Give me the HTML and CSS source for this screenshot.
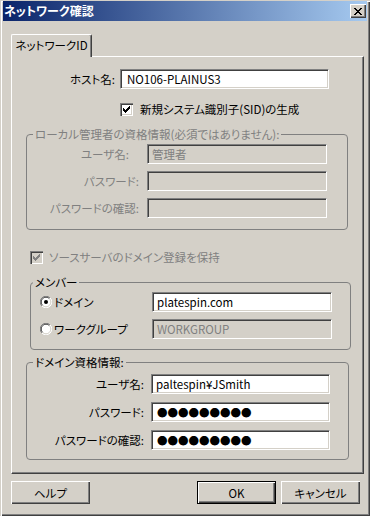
FILE: index.html
```html
<!DOCTYPE html>
<html lang="ja">
<head>
    <meta charset="UTF-8">
    <title>ネットワーク確認</title>
    <link rel="stylesheet" href="styles.css">
</head>
<body>
<div class="window">
    <div class="titlebar">
        <span class="title">ネットワーク確認</span>
        <span class="close">
            <svg width="8" height="7" viewBox="0 0 8 7" shape-rendering="crispEdges">
                <path d="M0 0h2v1h-2zM6 0h2v1h-2zM1 1h2v1h-2zM5 1h2v1h-2zM2 2h4v1h-4zM3 3h2v1h-2zM2 4h4v1h-4zM1 5h2v1h-2zM5 5h2v1h-2zM0 6h2v1h-2zM6 6h2v1h-2z" fill="#000"/>
            </svg>
        </span>
    </div>

    <div class="content">
        <div class="tabs">
            <div class="tab">ネットワークID</div>
        </div>

        <div class="panel">
            <div class="row host">
                <label class="lbl">ホスト名:</label>
                <div class="field">NO106-PLAINUS3</div>
            </div>

            <div class="check sid">
                <span class="box">
                    <svg width="13" height="13" viewBox="0 0 13 13" shape-rendering="crispEdges">
                        <path d="M3 5h1v3h-1zM4 6h1v3h-1zM5 7h1v3h-1zM6 6h1v3h-1zM7 5h1v3h-1zM8 4h1v3h-1zM9 3h1v3h-1z" fill="#000"/>
                    </svg>
                </span>
                <span>新規システム識別子(SID)の生成</span>
            </div>

            <fieldset class="group local disabled">
                <legend>ローカル管理者の資格情報(必須ではありません):</legend>
                <div class="row">
                    <label class="lbl short">ユーザ名:</label>
                    <div class="field off">管理者</div>
                </div>
                <div class="row">
                    <label class="lbl">パスワード:</label>
                    <div class="field off"></div>
                </div>
                <div class="row">
                    <label class="lbl">パスワードの確認:</label>
                    <div class="field off"></div>
                </div>
            </fieldset>

            <div class="check keep disabled">
                <span class="box off">
                    <svg width="13" height="13" viewBox="0 0 13 13" shape-rendering="crispEdges">
                        <path d="M3 5h1v3h-1zM4 6h1v3h-1zM5 7h1v3h-1zM6 6h1v3h-1zM7 5h1v3h-1zM8 4h1v3h-1zM9 3h1v3h-1z" fill="#808080"/>
                    </svg>
                </span>
                <span>ソースサーバのドメイン登録を保持</span>
            </div>

            <fieldset class="group member">
                <legend>メンバー</legend>
                <div class="row">
                    <label class="radio">
                        <svg width="12" height="12" viewBox="0 0 12 12">
                            <circle cx="6" cy="6" r="5.5" fill="#fff"/>
                            <path d="M1.9 10.1A5.5 5.5 0 0 1 10.1 1.9" fill="none" stroke="#808080"/>
                            <path d="M10.1 1.9A5.5 5.5 0 0 1 1.9 10.1" fill="none" stroke="#fff"/>
                            <path d="M2.6 9.4A4.5 4.5 0 0 1 9.4 2.6" fill="none" stroke="#404040"/>
                            <path d="M9.4 2.6A4.5 4.5 0 0 1 2.6 9.4" fill="none" stroke="#d4d0c8"/>
                            <circle cx="6" cy="6" r="2" fill="#000"/>
                        </svg>
                        <span>ドメイン</span>
                    </label>
                    <div class="field">platespin.com</div>
                </div>
                <div class="row">
                    <label class="radio">
                        <svg width="12" height="12" viewBox="0 0 12 12">
                            <circle cx="6" cy="6" r="5.5" fill="#fff"/>
                            <path d="M1.9 10.1A5.5 5.5 0 0 1 10.1 1.9" fill="none" stroke="#808080"/>
                            <path d="M10.1 1.9A5.5 5.5 0 0 1 1.9 10.1" fill="none" stroke="#fff"/>
                            <path d="M2.6 9.4A4.5 4.5 0 0 1 9.4 2.6" fill="none" stroke="#404040"/>
                            <path d="M9.4 2.6A4.5 4.5 0 0 1 2.6 9.4" fill="none" stroke="#d4d0c8"/>
                        </svg>
                        <span>ワークグループ</span>
                    </label>
                    <div class="field off">WORKGROUP</div>
                </div>
            </fieldset>

            <fieldset class="group domain">
                <legend>ドメイン資格情報:</legend>
                <div class="row">
                    <label class="lbl">ユーザ名:</label>
                    <div class="field">paltespin¥JSmith</div>
                </div>
                <div class="row">
                    <label class="lbl">パスワード:</label>
                    <div class="field dots">●●●●●●●●●</div>
                </div>
                <div class="row">
                    <label class="lbl">パスワードの確認:</label>
                    <div class="field dots">●●●●●●●●●</div>
                </div>
            </fieldset>
        </div>

        <div class="buttons">
            <button class="btn">ヘルプ</button>
            <button class="btn default">OK</button>
            <button class="btn">キャンセル</button>
        </div>
    </div>
</div>
</body>
</html>
```

FILE: styles.css
```css
html, body {
    margin: 0;
    padding: 0;
}

body {
    font-family: "Noto Sans CJK JP", sans-serif;
    font-size: 11.5px;
    font-feature-settings: "palt";
    color: #000;
    background: #d4d0c8;
}

.window {
    box-sizing: border-box;
    width: 370px;
    height: 516px;
    padding: 1px 3px 3px 3px;
    background: #d4d0c8;
    box-shadow: inset 1px 1px 0 #d4d0c8, inset 2px 2px 0 #fff,
                inset -1px -1px 0 #404040, inset -2px -2px 0 #808080;
}

.titlebar {
    height: 20px;
    display: flex;
    align-items: center;
    justify-content: space-between;
    padding: 0 1px 0 1px;
    background: linear-gradient(to right, #0a246a, #a6caf0);
    color: #fff;
    font-size: 12px;
    font-weight: bold;
    line-height: 20px;
}

.close {
    box-sizing: border-box;
    width: 16px;
    height: 14px;
    display: flex;
    align-items: center;
    justify-content: center;
    background: #d4d0c8;
    box-shadow: inset 1px 1px 0 #fff, inset -1px -1px 0 #404040, inset -2px -2px 0 #808080;
}

.content {
    padding: 13px 0 0 8px;
}

.tabs {
    display: flex;
}

.tab {
    box-sizing: border-box;
    position: relative;
    z-index: 1;
    width: 81px;
    height: 23px;
    margin-bottom: -1px;
    background: #d4d0c8;
    border-left: 1px solid #fff;
    border-top: 1px solid #fff;
    border-right: 1px solid #404040;
    border-radius: 2px 2px 0 0;
    box-shadow: inset -1px 0 0 #808080;
    text-align: center;
    line-height: 21px;
}

.panel {
    box-sizing: border-box;
    width: 353px;
    height: 418px;
    border-top: 1px solid #fff;
    border-left: 1px solid #fff;
    border-right: 1px solid #404040;
    border-bottom: 1px solid #404040;
    box-shadow: inset -1px -1px 0 #808080;
}

.row {
    display: flex;
    align-items: center;
    height: 20px;
}

.lbl {
    box-sizing: border-box;
    text-align: right;
    white-space: nowrap;
    line-height: 20px;
}

.field {
    box-sizing: border-box;
    height: 20px;
    padding: 0 4px;
    background: #fff;
    line-height: 19px;
    white-space: nowrap;
    overflow: hidden;
    border-top: 1px solid #808080;
    border-left: 1px solid #808080;
    border-right: 1px solid #fff;
    border-bottom: 1px solid #fff;
    box-shadow: inset 1px 1px 0 #404040, inset -1px -1px 0 #d4d0c8;
}

.field.off {
    background: #d4d0c8;
    color: #808080;
}

.field.dots {
    font-size: 10.5px;
    padding-left: 5px;
}

/* host name */
.host {
    margin-top: 12px;
}

.host .lbl {
    width: 104px;
    padding-right: 1px;
    margin-right: 4px;
}

.host .field {
    width: 209px;
    padding-left: 6px;
}

/* checkboxes */
.check {
    display: flex;
    align-items: center;
    gap: 6px;
    height: 13px;
    line-height: 13px;
}

.box {
    box-sizing: border-box;
    display: block;
    width: 13px;
    height: 13px;
    background: #fff;
    box-shadow: inset 1px 1px 0 #808080, inset 2px 2px 0 #404040,
                inset -1px -1px 0 #fff, inset -2px -2px 0 #d4d0c8;
}

.box svg {
    display: block;
}

.box.off {
    background: #d4d0c8;
}

.sid {
    margin-top: 14px;
    padding-left: 108px;
    gap: 7px;
}

.keep {
    margin-top: 21px;
    padding-left: 18px;
}

.disabled {
    color: #808080;
}

/* group boxes */
.group {
    box-sizing: border-box;
    margin: 0;
    padding: 0;
    border: 1px solid #808080;
    border-radius: 4px;
    min-inline-size: 0;
}

.group legend {
    margin-left: 6px;
    padding: 0 2px;
    line-height: 12px;
}

.group .row + .row {
    margin-top: 7px;
}

.local {
    width: 322px;
    margin: 12px 0 0 14px;
    padding: 4px 0 11px 0;
}

.local .lbl {
    width: 112px;
    margin-right: 8px;
}

.local .lbl.short {
    padding-right: 10px;
}

.local .field {
    width: 180px;
}

.member {
    width: 321px;
    margin: 12px 0 0 18px;
    padding: 4px 0 10px 0;
}

.member legend {
    margin-left: 2px;
}

.radio {
    display: flex;
    align-items: center;
    gap: 2px;
    box-sizing: border-box;
    width: 121px;
    padding-left: 9px;
}

.radio svg {
    display: block;
}

.member .field {
    width: 180px;
}

.domain {
    width: 323px;
    margin: 6px 0 0 14px;
    padding: 6px 0 9px 0;
}

.domain .row + .row {
    margin-top: 8px;
}

.domain .lbl {
    width: 117px;
    margin-right: 7px;
}

.domain .field {
    width: 179px;
}

/* buttons */
.buttons {
    display: flex;
    gap: 5px;
    width: 349px;
    margin-top: 7px;
}

.btn {
    box-sizing: border-box;
    width: 79px;
    height: 23px;
    padding: 0;
    font: inherit;
    color: #000;
    background: #d4d0c8;
    border: none;
    box-shadow: inset 1px 1px 0 #fff, inset -1px -1px 0 #404040, inset -2px -2px 0 #808080;
}

.btn.default {
    margin-left: auto;
    border: 1px solid #000;
}
```
